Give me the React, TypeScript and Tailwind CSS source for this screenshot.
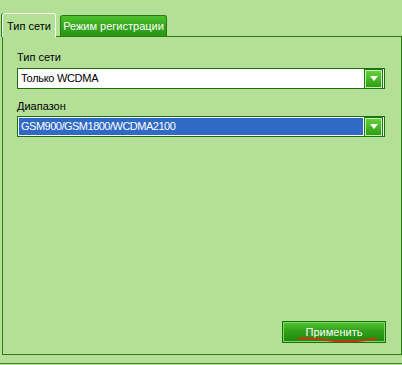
import React from 'react';

const font = { fontFamily: '"Liberation Sans", Arial, sans-serif' };

const ArrowButton: React.FC = () => (
  <div className="flex h-[18px] w-[17px] items-center justify-center border border-[#c9f0b0] bg-gradient-to-b from-[#5fd23c] to-[#2c9c14] shadow-[0_0_0_1px_#1f7a0c]">
    <svg width="8" height="5" viewBox="0 0 8 5">
      <path d="M0 0 H8 L4 5 Z" fill="#ffffff" />
    </svg>
  </div>
);

interface ComboProps {
  value: string;
  selected?: boolean;
}

const Combo: React.FC<ComboProps> = ({ value, selected }) => (
  <div className="flex h-[21px] w-[368px] items-center border border-[#1d6e0c] bg-white p-px">
    <div
      className={
        selected
          ? 'flex h-full flex-1 items-center bg-[#316ac5] pl-[2px] tracking-[-0.5px] text-white'
          : 'flex h-full flex-1 items-center pl-[2px] tracking-[-0.3px] text-black'
      }
    >
      {value}
    </div>
    <div className="ml-[2px] mr-px">
      <ArrowButton />
    </div>
  </div>
);

export default function App() {
  return (
    <div
      className="relative h-[365px] w-[402px] overflow-hidden bg-[#b3df97] text-[11px] leading-[13px]"
      style={font}
    >
      <div className="flex items-end pl-[2px] pt-[13px]">
        <div className="relative z-10 -mb-px flex h-[24px] w-[54px] items-start justify-center rounded-t-[3px] border border-b-0 border-[#f4fff0] bg-[#b3df97] pt-[6px] text-black shadow-[-1px_0_0_#2b7a12]">
          Тип сети
        </div>
        <div className="ml-[4px] flex h-[21px] w-[107px] items-center justify-center rounded-t-[3px] border border-b-0 border-[#237a10] bg-gradient-to-b from-[#4cc02c] via-[#36a81c] to-[#2a9514] text-white">
          Режим регистрации
        </div>
      </div>
      <div className="ml-[2px] flex h-[319px] w-[400px] flex-col border border-[#2b7a12] pl-[14px] pt-[14px]">
        <div className="text-black">Тип сети</div>
        <div className="mt-[4px]">
          <Combo value="Только WCDMA" />
        </div>
        <div className="mt-[11px] text-black">Диапазон</div>
        <div className="mt-[3px]">
          <Combo value="GSM900/GSM1800/WCDMA2100" selected />
        </div>
        <div className="mt-auto mb-[11px] flex justify-end pr-[15px]">
          <div className="flex h-[22px] w-[104px] items-center justify-center border border-[#1c6e0c] bg-gradient-to-b from-[#52c232] via-[#2e9e18] to-[#1e880c] text-white shadow-[inset_0_0_0_1px_#7fd860]">
            Применить
          </div>
        </div>
      </div>
      <div className="mt-[8px] h-px w-full bg-[#3f8a26]" />
      <svg className="absolute left-0 top-0" width="402" height="365" viewBox="0 0 402 365">
        <path
          d="M299 338.5 Q315 338 330 340.5 Q350 342.5 366 340 L376 338.5"
          fill="none"
          stroke="#c8341a"
          strokeWidth="2.2"
          strokeLinecap="round"
        />
      </svg>
    </div>
  );
}
